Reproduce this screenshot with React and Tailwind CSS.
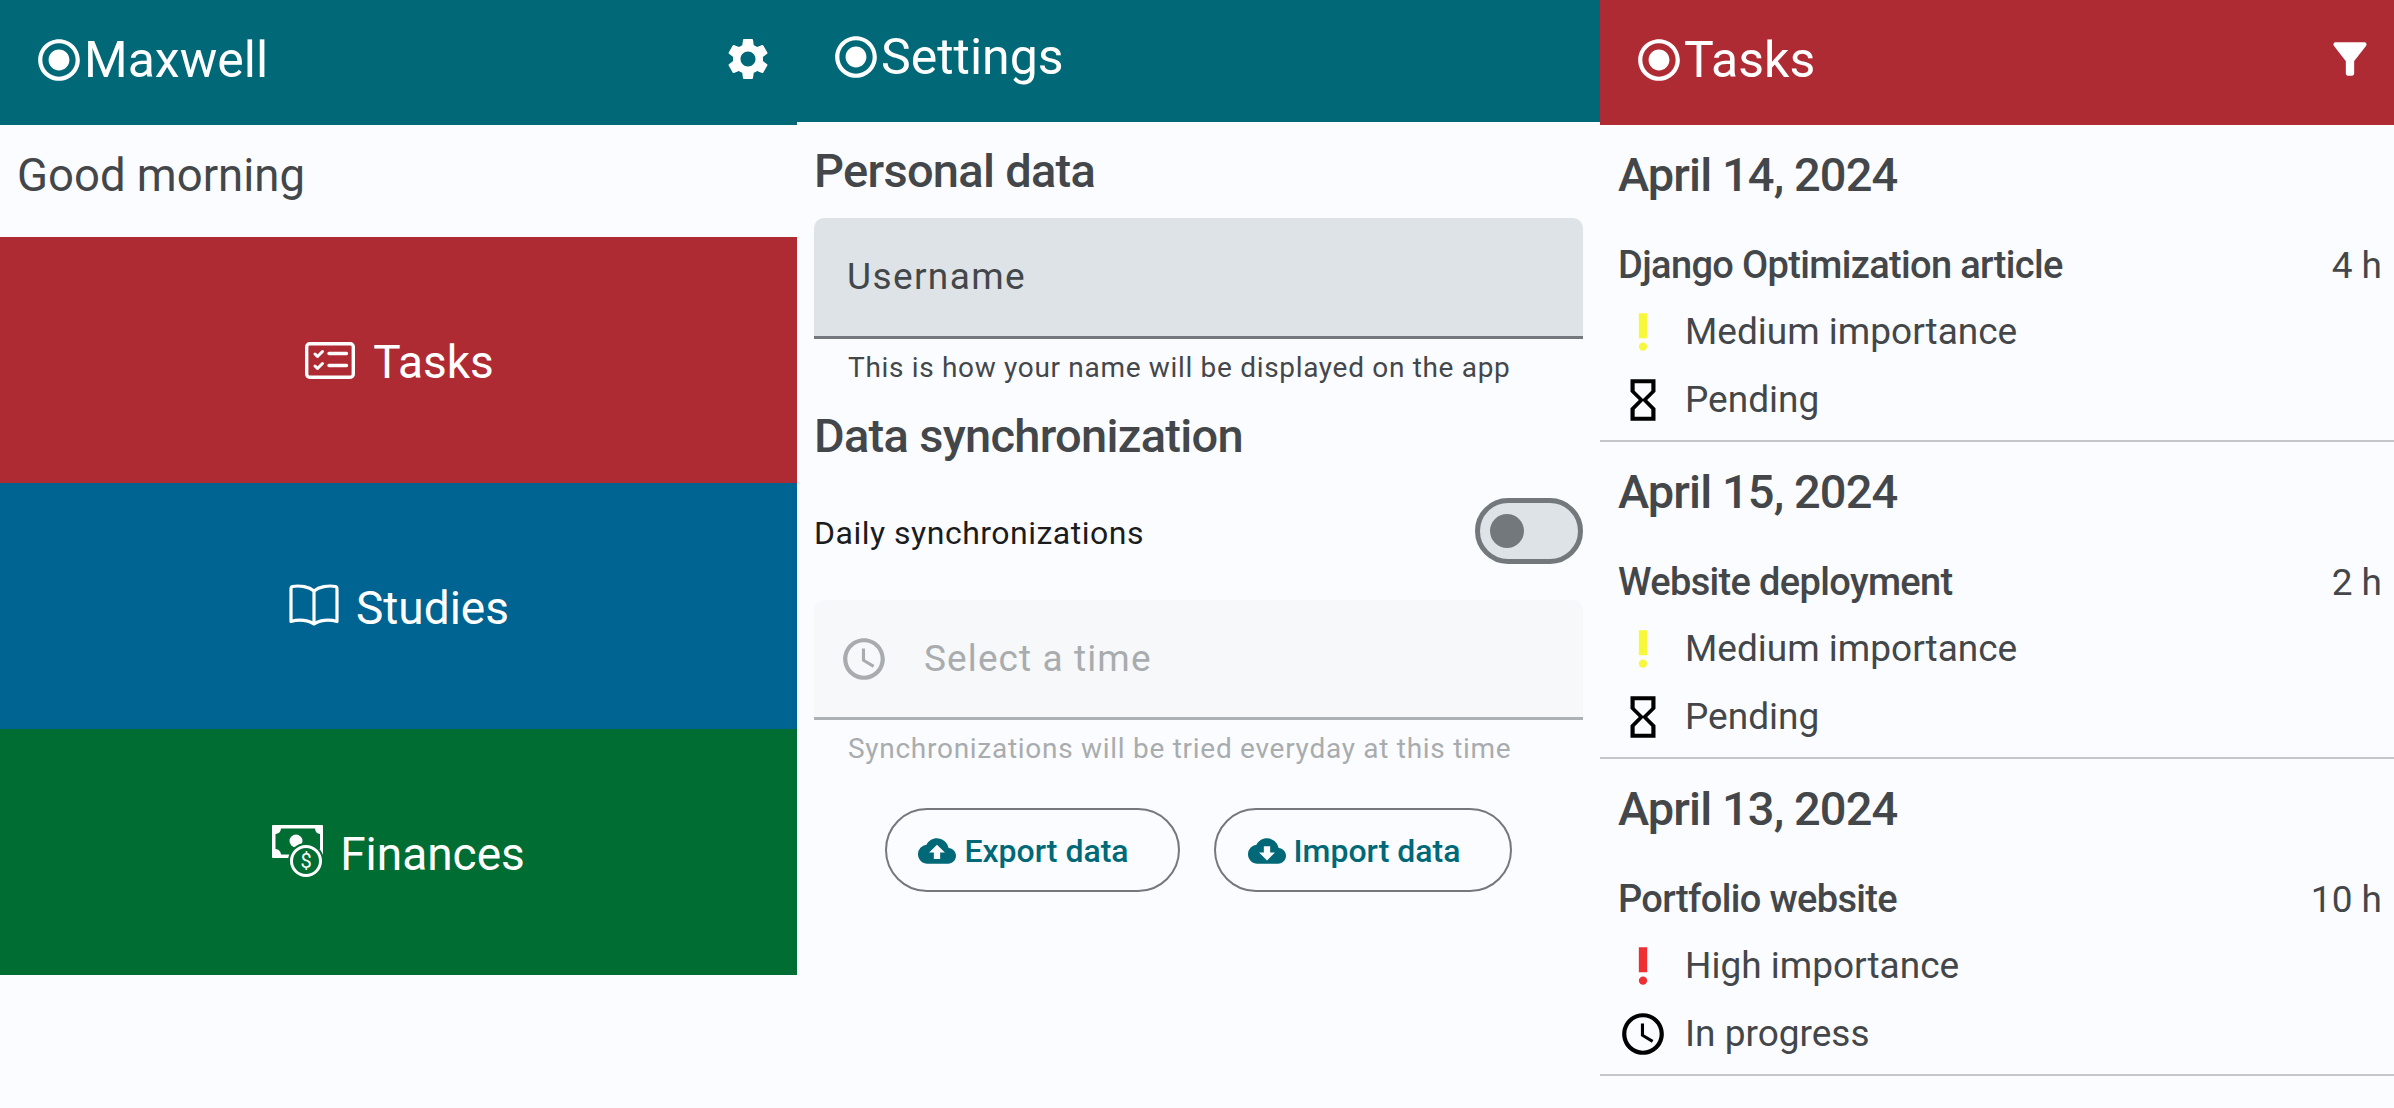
// App.jsx
import {
  MdRadioButtonChecked,
  MdSettings,
  MdFilterAlt,
  MdPriorityHigh,
  MdHourglassEmpty,
  MdAccessTime,
  MdCloudUpload,
  MdCloudDownload,
} from 'react-icons/md';

const TasksIcon = () => (
  <svg width="50" height="37" viewBox="0 0 50 37" fill="none" stroke="currentColor" strokeWidth="3.4" strokeLinecap="round" strokeLinejoin="round" className="mb-[3px] ml-[2px] mr-[2px]">
    <rect x="1.7" y="1.7" width="46.6" height="33.6" rx="3" />
    <path d="M24 11.5h17.5M24 23.5h17.5" />
    <path d="M10 12l2.5 2.5 5-5M10 24l2.5 2.5 5-5" strokeWidth="3" />
  </svg>
);

const BookIcon = () => (
  <svg width="52" height="42" viewBox="0 0 52 42" fill="none" stroke="currentColor" strokeWidth="3.2" strokeLinejoin="round" className="mb-[6px]">
    <path d="M26 7C21 3 12 1 4.500 2.500 3.500 2.700 3 3.500 3 5V37.500C11 35 21 36 26 40 31 36 41 35 49 37.500V5C49 3.500 48.500 2.700 47.500 2.500 40 1 31 3 26 7z" />
    <path d="M26 7V40" />
  </svg>
);

const MoneyIcon = () => (
  <svg width="52" height="52" viewBox="0 0 52 52" className="mb-[6px]">
    <rect x="0" y="0" width="51" height="33" rx="1" fill="currentColor" />
    <path d="M9 3.500H43Q43.500 8.500 48 9V24Q43.500 24.500 43 29.500H9Q8.500 24.500 3.500 24V9Q8.500 8.500 9 3.500Z" fill="#006d33" />
    <circle cx="24" cy="16" r="6.500" fill="currentColor" />
    <circle cx="34" cy="36" r="18" fill="#006d33" />
    <circle cx="34" cy="36" r="14.500" fill="none" stroke="currentColor" strokeWidth="3" />
    <text x="34" y="43" textAnchor="middle" fontSize="20" fontFamily="Roboto, sans-serif" fill="currentColor">$</text>
  </svg>
);

const Header = ({ title, color, className, right }) => (
  <div className={`flex items-center justify-between text-white ${color} ${className}`}>
    <div className="flex items-center pl-[34px]">
      <MdRadioButtonChecked size={50} />
      <span className="text-[50px] leading-none">{title}</span>
    </div>
    {right}
  </div>
);

const HomeLink = ({ color, icon, label }) => (
  <div className={`flex h-[246px] items-center justify-center gap-[16px] pt-1 text-white ${color}`}>
    {icon}
    <span className="text-[46px] leading-none">{label}</span>
  </div>
);

const tasks = [
  { date: 'April 14, 2024', title: 'Django Optimization article', hours: '4 h', level: 'Medium importance', levelColor: 'text-[#f7f73c]', status: 'Pending', StatusIcon: MdHourglassEmpty },
  { date: 'April 15, 2024', title: 'Website deployment', hours: '2 h', level: 'Medium importance', levelColor: 'text-[#f7f73c]', status: 'Pending', StatusIcon: MdHourglassEmpty },
  { date: 'April 13, 2024', title: 'Portfolio website', hours: '10 h', level: 'High importance', levelColor: 'text-[#ee2f33]', status: 'In progress', StatusIcon: MdAccessTime },
];

const TaskGroup = ({ task }) => {
  const StatusIcon = task.StatusIcon;
  return (
    <div className="border-b-2 border-[#c4c7ca] pb-[6px]">
      <div className="flex h-[100px] items-center pl-[18px] text-[47px] font-medium tracking-[-0.9px] text-[#44474a]">
        {task.date}
      </div>
      <div className="flex h-[73px] items-center justify-between pt-[8px] pl-[18px] pr-[12px] text-[37px] text-[#44474a]">
        <span className="text-[38px] font-medium tracking-[-0.65px]">{task.title}</span>
        <span>{task.hours}</span>
      </div>
      <div className="flex h-[68px] items-center gap-[17px] pl-[18px] text-[37px] text-[#44474a]">
        <MdPriorityHigh size={50} className={task.levelColor} />
        <span>{task.level}</span>
      </div>
      <div className="flex h-[68px] items-center gap-[17px] pl-[18px] text-[37px] text-[#44474a]">
        <StatusIcon size={50} className="text-black" />
        <span>{task.status}</span>
      </div>
    </div>
  );
};

const OutlineButton = ({ icon, label, width }) => (
  <button className={`flex h-[84px] items-center justify-center gap-[8px] rounded-full border-2 border-[#74787c] pt-[2px] pr-[18px] text-[32px] font-medium text-[#006876] ${width}`}>
    {icon}
    {label}
  </button>
);

export default function App() {
  return (
    <div className="flex min-h-screen bg-[#fafcff] font-['Roboto',sans-serif]">
      {/* Home */}
      <div className="w-[797px]">
        <Header
          title="Maxwell"
          color="bg-[#006876]"
          className="h-[125px] pb-[5px]"
          right={<MdSettings size={50} className="mr-[24px] mb-[2px]" />}
        />
        <div className="flex h-[112px] items-center pb-[9px] pl-[17px] text-[45.5px] text-[#44474a]">Good morning</div>
        <HomeLink color="bg-[#af2b33]" icon={<TasksIcon />} label="Tasks" />
        <HomeLink color="bg-[#006492]" icon={<BookIcon />} label="Studies" />
        <HomeLink color="bg-[#006d33]" icon={<MoneyIcon />} label="Finances" />
      </div>

      {/* Settings */}
      <div className="w-[803px]">
        <Header title="Settings" color="bg-[#006876]" className="h-[122px] pb-[9px]" />
        <div className="px-[17px]">
          <div className="flex h-[96px] items-center pt-[3px] text-[47px] font-medium tracking-[-0.7px] text-[#44474a]">Personal data</div>
          <div className="flex h-[121px] items-center rounded-t-[10px] border-b-[3px] border-[#74787c] bg-[#dde3e6] pl-[33px] text-[37px] tracking-[1.4px] text-[#44474a]">
            Username
          </div>
          <div className="flex h-[56px] items-center pt-[2px] pl-[34px] text-[28px] tracking-[0.68px] text-[#44474a]">
            This is how your name will be displayed on the app
          </div>
          <div className="flex h-[82px] items-center text-[47px] font-medium tracking-[-0.7px] text-[#44474a]">Data synchronization</div>
          <div className="flex h-[123px] items-center justify-between pb-[15px] text-[32px] tracking-[0.5px] text-[#1a1c1e]">
            <span className="mt-[3px]">Daily synchronizations</span>
            <div className="flex h-[66px] w-[108px] items-center rounded-full border-[5px] border-[#72787c] bg-[#dde3e6] pl-[10px]">
              <div className="h-[34px] w-[34px] rounded-full bg-[#72787c]" />
            </div>
          </div>
          <div className="flex h-[120px] items-center gap-[35px] rounded-t-[10px] border-b-[3px] border-[#aeb1b3] bg-[#f6f8f9] pl-[25px] text-[37px] tracking-[1.1px] text-[#a9acae]">
            <MdAccessTime size={50} />
            <span>Select a time</span>
          </div>
          <div className="flex h-[56px] items-center pt-[2px] pl-[34px] text-[28px] tracking-[0.72px] text-[#a9acae]">
            Synchronizations will be tried everyday at this time
          </div>
          <div className="mt-[32px] flex justify-center gap-[34px]">
            <OutlineButton icon={<MdCloudUpload size={38} />} label="Export data" width="w-[295px]" />
            <OutlineButton icon={<MdCloudDownload size={38} />} label="Import data" width="w-[298px]" />
          </div>
        </div>
      </div>

      {/* Tasks */}
      <div className="w-[794px]">
        <Header
          title="Tasks"
          color="bg-[#af2b33]"
          className="h-[125px] pb-[5px]"
          right={<MdFilterAlt size={50} className="mr-[19px] mb-[3px]" />}
        />
        {tasks.map((task) => (
          <TaskGroup key={task.date} task={task} />
        ))}
      </div>
    </div>
  );
}
